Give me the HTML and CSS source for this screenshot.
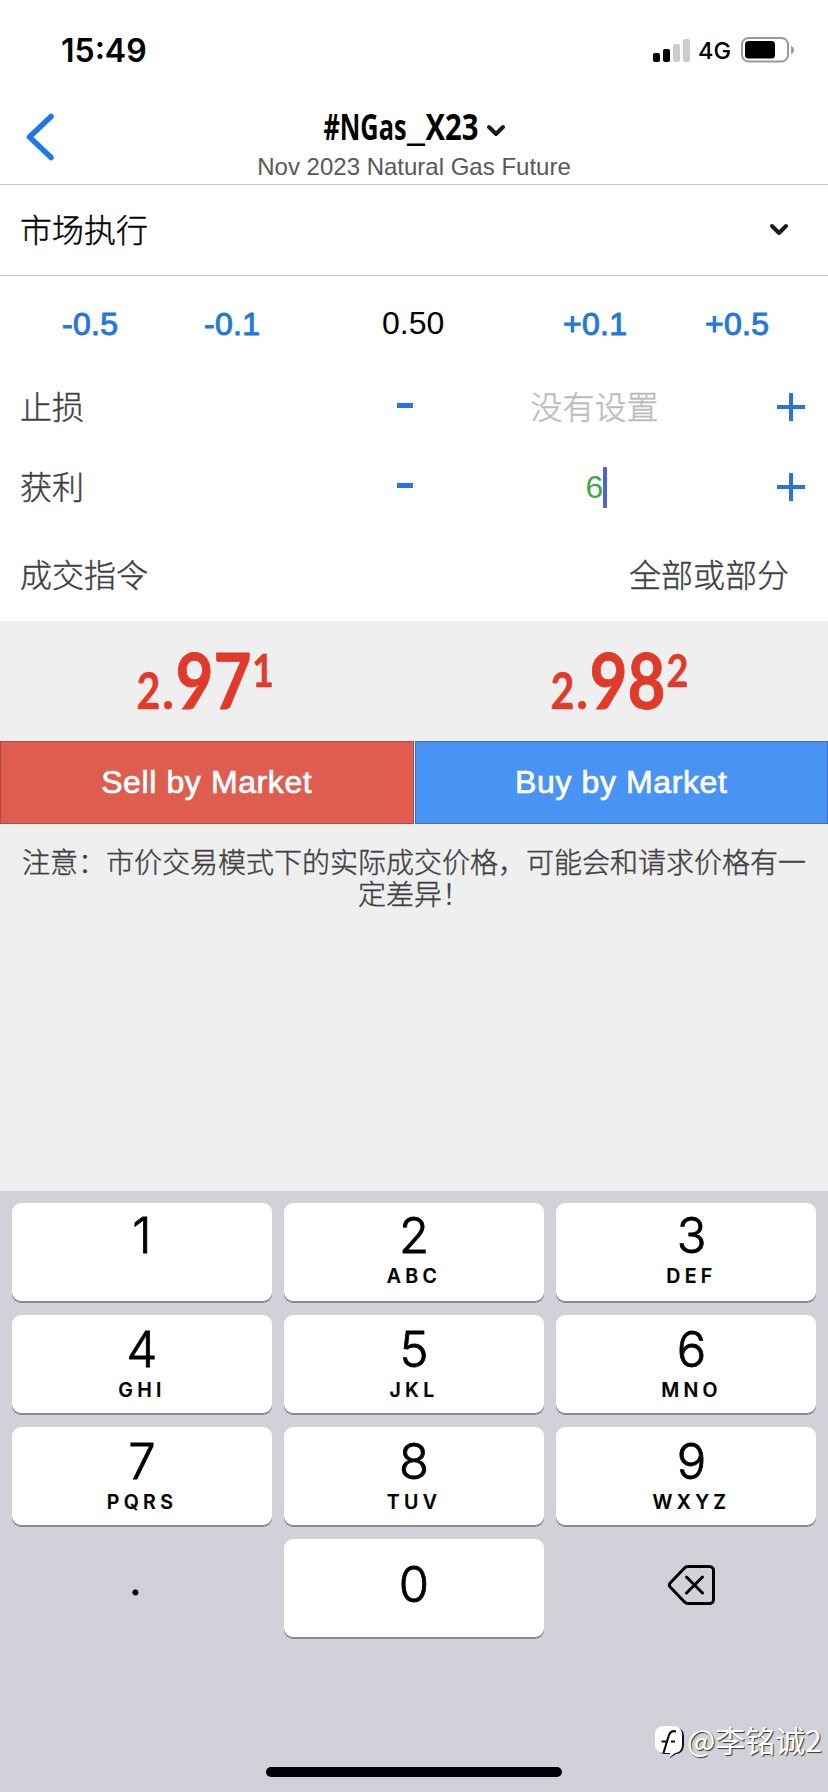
FILE: index.html
```html
<!DOCTYPE html>
<html lang="zh-CN">
<head>
<meta charset="utf-8">
<title>#NGas_X23</title>
<link rel="stylesheet" href="styles.css">
</head>
<body>
<main class="screen">
  <div class="status">
    <span class="time">15:49</span>
    <div class="indicators">
      <svg class="signal" width="38" height="24" viewBox="0 0 38 24">
        <rect x="0" y="15" width="7" height="9" rx="2"/>
        <rect x="10" y="11" width="7" height="13" rx="2"/>
        <rect class="off" x="20" y="6" width="7" height="18" rx="2"/>
        <rect class="off" x="30" y="1" width="7" height="23" rx="2"/>
      </svg>
      <span class="network">4G</span>
      <svg class="battery" width="54" height="26" viewBox="0 0 54 26">
        <rect x="1" y="1" width="46" height="23.5" rx="6.5" fill="none" stroke="#999" stroke-width="2"/>
        <rect x="4" y="4" width="30" height="17.5" rx="3.5"/>
        <path d="M50 9q3 1 3 4t-3 4z" fill="#999"/>
      </svg>
    </div>
  </div>

  <header class="header">
    <svg class="back" width="30" height="50" viewBox="0 0 30 50"><path d="M25 4.500L3.500 25 25 45.500"/></svg>
    <div class="heading">
      <svg class="title" width="184" height="54" viewBox="0 0 184 54">
        <text y="40"><tspan x="0.500" textLength="83" lengthAdjust="spacingAndGlyphs">#NGas</tspan><tspan x="84" textLength="18" lengthAdjust="spacingAndGlyphs">_</tspan><tspan x="102.500" textLength="53" lengthAdjust="spacingAndGlyphs">X23</tspan></text>
        <path d="M166 27l7 7 7-7"/>
      </svg>
      <div class="subtitle">Nov 2023 Natural Gas Future</div>
    </div>
  </header>

  <div class="mode">
    <span class="cjk">市场执行</span>
    <svg class="caret" width="20" height="14" viewBox="0 0 20 14"><path d="M3 3l7 7L17 3"/></svg>
  </div>

  <div class="volume">
    <span class="step s1">-0.5</span>
    <span class="step s2">-0.1</span>
    <span class="lots">0.50</span>
    <span class="step s3">+0.1</span>
    <span class="step s4">+0.5</span>
  </div>

  <div class="row stop">
    <span class="cjk">止损</span>
    <svg class="minus" width="16" height="30"><path d="M0 13.500h16"/></svg>
    <span class="value empty cjk">没有设置</span>
    <svg class="plus" width="30" height="30"><path d="M1 15h28M15 1v28"/></svg>
  </div>
  <div class="row profit">
    <span class="cjk">获利</span>
    <svg class="minus" width="16" height="30"><path d="M0 13.500h16"/></svg>
    <span class="value amount">6<i class="cursor"></i></span>
    <svg class="plus" width="30" height="30"><path d="M1 15h28M15 1v28"/></svg>
  </div>
  <div class="fill-policy">
    <span class="cjk">成交指令</span>
    <span class="cjk">全部或部分</span>
  </div>

  <section class="trade">
    <div class="prices">
      <svg class="price" width="414" height="120" viewBox="0 0 414 120">
        <text y="88"><tspan class="small" x="136.500" textLength="24" lengthAdjust="spacingAndGlyphs">2</tspan><tspan class="small" x="162">.</tspan><tspan class="big" x="175.500" textLength="76" lengthAdjust="spacingAndGlyphs">97</tspan><tspan class="sup" x="252" y="66" textLength="22" lengthAdjust="spacingAndGlyphs">1</tspan></text>
      </svg>
      <svg class="price" width="414" height="120" viewBox="0 0 414 120">
        <text y="88"><tspan class="small" x="136.500" textLength="24" lengthAdjust="spacingAndGlyphs">2</tspan><tspan class="small" x="162">.</tspan><tspan class="big" x="175.500" textLength="76" lengthAdjust="spacingAndGlyphs">98</tspan><tspan class="sup" x="252.500" y="66" textLength="22" lengthAdjust="spacingAndGlyphs">2</tspan></text>
      </svg>
    </div>
    <div class="buttons">
      <div class="btn sell">Sell by Market</div>
      <div class="btn buy">Buy by Market</div>
    </div>
    <p class="note">注意：市价交易模式下的实际成交价格，可能会和请求价格有一<br>定差异！</p>
  </section>

  <section class="keyboard">
    <div class="keys">
      <div class="key first"><b>1</b></div>
      <div class="key first"><b>2</b><small>ABC</small></div>
      <div class="key first right"><b>3</b><small>DEF</small></div>
      <div class="key"><b>4</b><small>GHI</small></div>
      <div class="key"><b>5</b><small>JKL</small></div>
      <div class="key right"><b>6</b><small>MNO</small></div>
      <div class="key"><b>7</b><small>PQRS</small></div>
      <div class="key"><b>8</b><small>TUV</small></div>
      <div class="key right"><b>9</b><small>WXYZ</small></div>
      <div class="key plain point"><b>.</b></div>
      <div class="key zero"><b>0</b></div>
      <div class="key plain erase">
        <svg width="50" height="42" viewBox="0 0 50 42">
          <path d="M21 2.500H42.500a4 4 0 0 1 4 4V35.500a4 4 0 0 1-4 4H21a5 5 0 0 1-3.500-1.500L3.200 23a3 3 0 0 1 0-4L17.500 4A5 5 0 0 1 21 2.500z"/>
          <path d="M19.500 13l16 16M35.500 13l-16 16"/>
        </svg>
      </div>
    </div>
    <div class="watermark">
      <svg width="32" height="34" viewBox="0 0 32 34">
        <path d="M11 2.500h11a8 8 0 0 1 8 8v9q0 9-8 9.500l-6 4V29h-5a8 8 0 0 1-8-8V10.500a8 8 0 0 1 8-8z" fill="#111"/>
        <path d="M9 1h11a8 8 0 0 1 8 8v11q0 7-7 8l-5 4v-4H9a8 8 0 0 1-8-8V9a8 8 0 0 1 8-8z" fill="#fff"/>
        <path d="M22 6.500q-6-1.500-7.500 5L9.500 28M7.500 16.500h6.500M17 16.500h4" fill="none" stroke="#111" stroke-width="2.200"/>
      </svg>
      <span>@李铭诚2</span>
    </div>
    <div class="home"></div>
  </section>
</main>
</body>
</html>
```

FILE: styles.css
```css
* { box-sizing: border-box; }
body {
  margin: 0;
  background: #fff;
  color: #000;
  font-family: "Liberation Sans", "Noto Sans CJK SC", sans-serif;
  font-size: 32px;
}
svg { display: block; flex: none; }
.screen { width: 828px; height: 1792px; overflow: hidden; display: flex; flex-direction: column; }
.screen > * { flex: none; }
.cjk { font-weight: 300; padding-bottom: 4px; -webkit-text-stroke: 0.4px; }

.status {
  height: 100px;
  padding: 0 33px 0 61px;
  display: flex;
  justify-content: space-between;
  align-items: center;
  font-family: Inter, sans-serif;
}
.time { font-weight: 600; font-size: 32px; }
.indicators { display: flex; align-items: center; }
.signal .off { fill: #ccc; }
.network { font-size: 23.500px; font-weight: 500; width: 50px; padding-left: 7px; padding-top: 1px; }

.header {
  height: 85px;
  border-bottom: 1px solid #c4c4c6;
  display: grid;
  grid-template-columns: 100px 1fr 100px;
}
.back { margin: 12px 0 0 26px; }
.back path, .caret path, .title path { fill: none; stroke-linecap: round; stroke-linejoin: round; }
.back path { stroke: #1b78e6; stroke-width: 5.500; }
.heading { display: flex; flex-direction: column; align-items: center; }
.title { margin-left: 2px; }
.title text { font: bold 36px "Open Sans", sans-serif; }
.title path, .caret path { stroke: #1a1a1a; stroke-width: 4; }
.subtitle { font-size: 24px; line-height: 28px; margin-top: -1px; color: #58585a; white-space: nowrap; }

.mode {
  height: 91px;
  padding: 0 39px 0 20px;
  border-bottom: 1px solid #c4c4c6;
  display: flex;
  align-items: center;
  justify-content: space-between;
}

.volume {
  height: 91px;
  padding-top: 29px;
  display: grid;
  grid-template-columns: 160px 142px 222px 142px 162px;
  line-height: 36px;
}
.step { color: #2478dc; -webkit-text-stroke: 1px #2478dc; padding: 1px 0 0 62px; letter-spacing: 0.300px; }
.s2 { padding-left: 44px; }
.lots { padding-left: 80px; }
.s3 { padding-left: 39px; }
.s4 { padding-left: 39px; }

.row {
  height: 80px;
  padding: 0 22px 0 20px;
  display: grid;
  grid-template-columns: 377px 16px 1fr 30px;
  align-items: center;
  color: #404042;
}
.minus path, .plus path { stroke: #2576e0; stroke-width: 4; fill: none; }
.minus path { stroke-width: 5; }
.value { justify-self: center; display: flex; align-items: center; color: #44a648; }
.amount { padding-left: 4px; }
.empty { color: #bcbcbe; }
.cursor { width: 4px; height: 41px; background: #4f62dc; border-radius: 1px; }

.fill-policy {
  height: 94px;
  padding: 2px 39px 0 20px;
  display: flex;
  align-items: center;
  justify-content: space-between;
  color: #404042;
}

.trade { height: 570px; background: #efefef; }
.prices { display: flex; height: 120px; }
.price text { fill: #e03a2b; stroke: #e03a2b; stroke-width: 0.4; font-family: Lato, sans-serif; font-weight: 700; }
.price .small { font-size: 51px; }
.price .big { font-size: 76px; stroke-width: 0.8; }
.price .sup { font-size: 46px; }
.buttons { display: flex; height: 83px; gap: 1px; }
.btn {
  flex: 1;
  color: #fff;
  text-align: center;
  line-height: 81px;
  letter-spacing: 0.600px;
  -webkit-text-stroke: 0.7px #fff;
}
.sell { background: #df5d4f; border: 1px solid #b04a45; }
.buy { background: #4893f3; border: 1px solid #3d72b8; }
.note { margin: 24px 0 0; font-size: 28px; line-height: 32px; font-weight: 300; text-align: center; color: #404042; -webkit-text-stroke: 0.4px; }

.keyboard { height: 602px; background: #d1d2d9; padding: 12px 12px 0; font-family: Inter, sans-serif; position: relative; }
.keys { display: grid; grid-template-columns: repeat(3, 260px); grid-auto-rows: 98px; gap: 14px 12px; }
.key {
  background: #fff;
  border-radius: 9px;
  box-shadow: 0 2px 0 #898a8d;
  display: flex;
  flex-direction: column;
  align-items: center;
  padding-top: 10px;
}
.key.first { padding-top: 8px; }
.key.right { padding-left: 11px; }
.key b { font-weight: 300; font-size: 49px; line-height: 50px; -webkit-text-stroke: 0.8px; }
.key small { font-weight: 600; font-size: 19.500px; line-height: 24px; letter-spacing: 4.300px; margin-top: 3px; -webkit-text-stroke: 0.2px; }
.key.zero { padding-top: 21px; }
.key.plain { background: none; box-shadow: none; }
.key.point { padding-top: 14px; padding-right: 13px; }
.key.erase { padding-top: 25px; padding-left: 12px; }
.erase path { fill: none; stroke: #000; stroke-width: 3; stroke-linecap: round; stroke-linejoin: round; }

.watermark {
  position: absolute;
  right: 6px;
  top: 526px;
  display: flex;
  align-items: center;
  gap: 1px;
  color: #fff;
  font: 30px/44px "Noto Sans CJK SC", sans-serif;
  text-shadow: 1px 1px 1px #333;
}
.watermark svg { margin-top: 6px; }
.home { position: absolute; left: 266px; top: 576px; width: 296px; height: 10px; border-radius: 5px; background: #000; }
```
